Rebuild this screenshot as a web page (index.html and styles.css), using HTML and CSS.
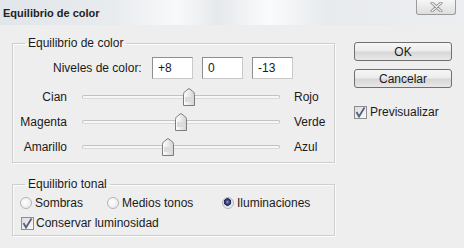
FILE: index.html
```html
<!DOCTYPE html>
<html lang="es">
<head>
    <meta charset="UTF-8">
    <title>Equilibrio de color</title>
    <link rel="stylesheet" href="styles.css">
</head>
<body>
    <div class="window">
        <div class="titlebar">
            <span class="title">Equilibrio de color</span>
            <button class="close" aria-label="Cerrar">
                <svg width="13" height="10" viewBox="0 0 13 10">
                    <path d="M2 1 L11 9 M11 1 L2 9" stroke="#8a8a8a" stroke-width="3" stroke-linecap="round"/>
                    <path d="M2 1 L11 9 M11 1 L2 9" stroke="#f4f4f4" stroke-width="1.2" stroke-linecap="round"/>
                </svg>
            </button>
        </div>

        <div class="content">
            <div class="left">
                <!-- Equilibrio de color -->
                <fieldset class="group group-color">
                    <legend>Equilibrio de color</legend>
                    <div class="levels">
                        <label class="levels-label">Niveles de color:</label>
                        <input class="level" type="text" value="+8">
                        <input class="level" type="text" value="0">
                        <input class="level" type="text" value="-13">
                    </div>

                    <div class="sliders">
                        <div class="slider-row">
                            <span class="slider-label">Cian</span>
                            <div class="track">
                                <span class="thumb" style="left: 54%">
                                    <svg width="12" height="18" viewBox="0 0 12 18"><use href="#thumb"/></svg>
                                </span>
                            </div>
                            <span class="slider-end">Rojo</span>
                        </div>
                        <div class="slider-row">
                            <span class="slider-label">Magenta</span>
                            <div class="track">
                                <span class="thumb" style="left: 50%">
                                    <svg width="12" height="18" viewBox="0 0 12 18"><use href="#thumb"/></svg>
                                </span>
                            </div>
                            <span class="slider-end">Verde</span>
                        </div>
                        <div class="slider-row">
                            <span class="slider-label">Amarillo</span>
                            <div class="track">
                                <span class="thumb" style="left: 43.5%">
                                    <svg width="12" height="18" viewBox="0 0 12 18"><use href="#thumb"/></svg>
                                </span>
                            </div>
                            <span class="slider-end">Azul</span>
                        </div>
                    </div>
                </fieldset>

                <!-- Equilibrio tonal -->
                <fieldset class="group group-tonal">
                    <legend>Equilibrio tonal</legend>
                    <div class="tones">
                        <label class="option"><span class="radio"></span>Sombras</label>
                        <label class="option"><span class="radio"></span>Medios tonos</label>
                        <label class="option"><span class="radio checked"></span>Iluminaciones</label>
                    </div>
                    <label class="check check-tonal">
                        <span class="box">
                            <svg width="11" height="11" viewBox="0 0 11 11"><use href="#tick"/></svg>
                        </span>Conservar luminosidad
                    </label>
                </fieldset>
            </div>

            <div class="actions">
                <button class="btn">OK</button>
                <button class="btn">Cancelar</button>
                <label class="check check-preview">
                    <span class="box">
                        <svg width="11" height="11" viewBox="0 0 11 11"><use href="#tick"/></svg>
                    </span>Previsualizar
                </label>
            </div>
        </div>
    </div>

    <svg class="defs" width="0" height="0">
        <defs>
            <linearGradient id="thumb-fill" x1="0" y1="0" x2="1" y2="0">
                <stop offset="0" stop-color="#ffffff"/>
                <stop offset="0.5" stop-color="#eaeaea"/>
                <stop offset="1" stop-color="#d2d2d2"/>
            </linearGradient>
            <g id="thumb">
                <path d="M0.5 17.5 V6.5 Q0.5 4.5 2.5 3 L6 0.5 L9.5 3 Q11.5 4.5 11.5 6.5 V17.5 Z" fill="url(#thumb-fill)" stroke="#7c7c7c"/>
                <rect x="2" y="9" width="8" height="5" fill="#dcdcdc"/>
            </g>
            <path id="tick" d="M1.5 5 L4 9.5 L9.5 0.5" fill="none" stroke="#56627e" stroke-width="1.8"/>
        </defs>
    </svg>
</body>
</html>
```

FILE: styles.css
```css
/* Estilos generales */
body {
    margin: 0;
    font-family: "Liberation Sans", Arial, sans-serif;
    font-size: 12px;
    color: #1a1a1a;
}

.window {
    width: 464px;
    height: 248px;
    background: #eeeeee;
    overflow: hidden;
}

/* Barra de título */
.titlebar {
    height: 25px;
    display: flex;
    justify-content: space-between;
    align-items: flex-start;
    padding-left: 3px;
    background: linear-gradient(90deg, #e2e5e9 0%, #e9ecef 25%, #f8f9fa 38%, #e6e9ec 47%, #fafbfc 58%, #e8ebee 70%, #eceef1 100%);
}

.title {
    font-weight: bold;
    font-size: 11px;
    line-height: 27px;
    color: #222;
}

.close {
    width: 40px;
    height: 15px;
    margin: 0 8px 0 0;
    padding: 0;
    border: 1px solid #9a9a9a;
    border-top: none;
    border-radius: 0 0 3px 3px;
    background: linear-gradient(#f6f6f6, #dedede);
    display: flex;
    align-items: center;
    justify-content: center;
}

/* Contenido */
.content {
    display: flex;
    padding: 11px 0 0 12px;
}

.left {
    width: 323px;
}

.group {
    margin: 0;
    padding: 0;
    border: 1px solid #cfcfcf;
    box-shadow: inset 1px 1px #fbfbfb, 1px 1px #fbfbfb;
    min-width: 0;
}

.group legend {
    margin-left: 12px;
    padding: 0 3px;
    line-height: 14px;
}

.group-tonal {
    margin-top: 14px;
    padding-bottom: 2px;
}

/* Niveles */
.levels {
    display: flex;
    align-items: center;
    gap: 9px;
    margin-top: 7px;
    padding-left: 40px;
}

.levels-label {
    width: 90px;
    white-space: nowrap;
}

.level {
    box-sizing: border-box;
    width: 41px;
    height: 22px;
    margin: 0;
    padding: 0 5px;
    border: 1px solid #8e8f8f;
    border-bottom-color: #c9c9c9;
    border-right-color: #c9c9c9;
    background: #fff;
    font-family: "Liberation Sans", Arial, sans-serif;
    font-size: 12px;
    color: #1a1a1a;
}

/* Deslizadores */
.sliders {
    margin-top: 5px;
    padding-bottom: 3px;
}

.slider-row {
    display: flex;
    align-items: center;
    height: 25px;
}

.slider-label {
    width: 54px;
    text-align: right;
}

.track {
    position: relative;
    box-sizing: border-box;
    width: 198px;
    height: 4px;
    margin: 0 14px 0 15px;
    border: 1px solid #c2c2c2;
    border-bottom-color: #d9d9d9;
    border-radius: 2px;
    background: #f7f7f7;
}

.thumb {
    position: absolute;
    top: 50%;
    width: 12px;
    height: 18px;
    transform: translate(-50%, -50%);
}

.thumb svg {
    display: block;
}

/* Equilibrio tonal */
.tones {
    display: grid;
    grid-template-columns: 87px 115px auto;
    height: 20px;
    align-items: center;
    margin-top: 2px;
    padding-left: 7px;
}

.option {
    display: flex;
    align-items: center;
    white-space: nowrap;
}

.radio {
    box-sizing: border-box;
    width: 12px;
    height: 12px;
    margin-right: 3px;
    border: 1px solid #b4b4b4;
    border-radius: 50%;
    background: radial-gradient(circle at 40% 40%, #ffffff, #e4e4e4);
}

.radio.checked {
    background: radial-gradient(circle at 45% 40%, #9aa5d0 0, #34407f 2px, #1d2656 3.5px, #d8dbe4 4px, #f2f2f2 6px);
}

.check {
    display: flex;
    align-items: center;
    height: 20px;
    white-space: nowrap;
}

.check-tonal {
    padding-left: 8px;
}

.box {
    box-sizing: border-box;
    width: 13px;
    height: 13px;
    margin-right: 2px;
    border: 1px solid #8f8f8f;
    background: linear-gradient(135deg, #dcdcdc, #fafafa);
    display: flex;
    align-items: center;
    justify-content: center;
}

.box svg {
    display: block;
}

/* Botones */
.actions {
    display: flex;
    flex-direction: column;
    width: 98px;
    margin: 6px 0 0 19px;
}

.btn {
    box-sizing: border-box;
    height: 19px;
    margin: 0 0 8px;
    padding: 0;
    border: 1px solid #707070;
    border-radius: 3px;
    background: linear-gradient(#f6f6f6 0%, #ececec 45%, #d7d7d7 55%, #e8e8e8 100%);
    font-family: "Liberation Sans", Arial, sans-serif;
    font-size: 12px;
    color: #1a1a1a;
}

.check-preview {
    margin-top: 6px;
}

.check-preview .box {
    margin-right: 3px;
}

.defs {
    position: absolute;
}
```
